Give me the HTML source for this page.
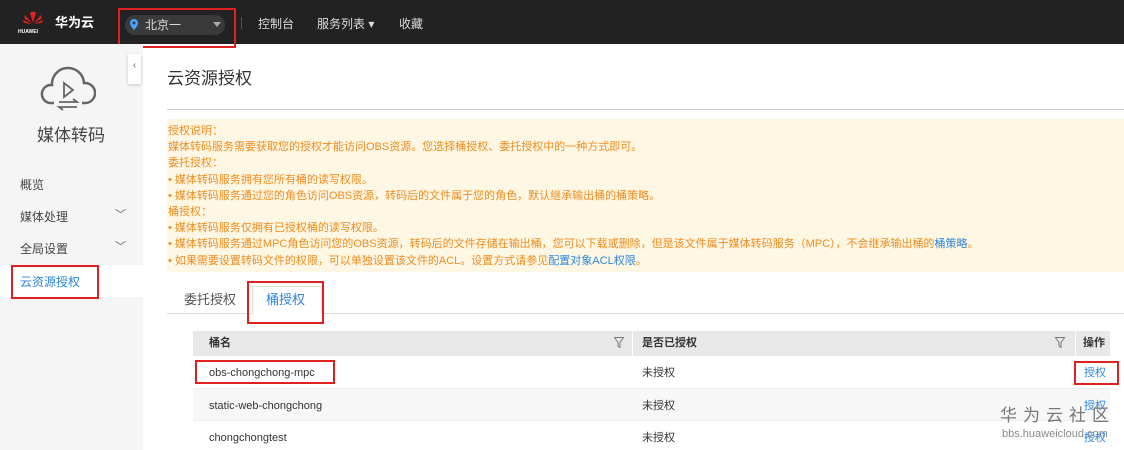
<!DOCTYPE html><html><head><meta charset="utf-8"><style>
*{margin:0;padding:0;box-sizing:border-box}
body{width:1124px;height:450px;overflow:hidden;background:#fff;font-family:"Liberation Sans","Noto Sans CJK SC",sans-serif;position:relative;color:#333}
.a{position:absolute;line-height:1.2}
.top{left:0;top:0;width:1124px;height:44px;background:#222}
.red{border:2px solid #e0211f}
.side{left:0;top:44px;width:143px;height:406px;background:#f5f5f5}
.nt{font-size:11px;line-height:16.2px!important;color:#f08c1e}
.nt a{color:#2e86de}
.fi{width:10px;height:11px}
</style></head><body>
<div class="a top"></div>
<svg class="a" style="left:21px;top:11px" width="24" height="18" viewBox="0 0 24 18"><g fill="#e0211f"><path d="M12 12 L9 2 Q11 0 12 1Z"/><path d="M12 12 L15 2 Q13 0 12 1Z"/><path d="M11 12 L4 4 Q3 6 4 8Z"/><path d="M13 12 L20 4 Q21 6 20 8Z"/><path d="M11 13 L2 9 Q2 11 4 12Z"/><path d="M13 13 L22 9 Q22 11 20 12Z"/></g></svg>
<div class="a" style="left:18px;top:29px;font-size:5px;color:#fff;font-weight:bold">HUAWEI</div>
<div class="a" style="left:55px;top:15px;font-size:13px;color:#fff;font-weight:bold">华为云</div>
<div class="a red" style="left:118px;top:8px;width:118px;height:40px"></div>
<div class="a" style="left:125px;top:15px;width:100px;height:20px;border-radius:10px;background:#3a3a3a"></div>
<svg class="a" style="left:130px;top:19px" width="8" height="11"><path d="M4 0a4 4 0 0 1 4 4c0 3-4 7-4 7S0 7 0 4a4 4 0 0 1 4-4z" fill="#4aa3ff"/><circle cx="4" cy="4" r="1.5" fill="#3a3a3a"/></svg>
<div class="a" style="left:145px;top:18px;font-size:12px;color:#ddd">北京一</div>
<div class="a" style="left:213px;top:22px;border:4px solid transparent;border-top:5px solid #aaa"></div>
<div class="a" style="left:241px;top:17px;width:1px;height:12px;background:#555"></div>
<div class="a" style="left:258px;top:17px;font-size:12px;color:#ddd">控制台</div>
<div class="a" style="left:317px;top:17px;font-size:12px;color:#ddd">服务列表 ▾</div>
<div class="a" style="left:399px;top:17px;font-size:12px;color:#ddd">收藏</div>
<div class="a side"></div>
<svg class="a" style="left:40px;top:63px" width="56" height="50" viewBox="0 0 56 50"><path d="M14 40 H10 A9 9 0 0 1 12 22 A16 16 0 0 1 44 20 A10 10 0 0 1 46 40 H42" fill="none" stroke="#666" stroke-width="2.5"/><path d="M24 20 L33 27 L24 34Z" fill="none" stroke="#666" stroke-width="1.8"/><path d="M19 39 H37 L33 36 M37 44 H19 L23 47" fill="none" stroke="#666" stroke-width="1.8"/></svg>
<div class="a" style="left:37px;top:126px;font-size:17px;color:#444">媒体转码</div>
<div class="a" style="left:20px;top:178px;font-size:12px;color:#444">概览</div>
<div class="a" style="left:20px;top:210px;font-size:12px;color:#444">媒体处理</div>
<div class="a" style="left:115px;top:209px;font-size:11px;color:#666">﹀</div>
<div class="a" style="left:20px;top:242px;font-size:12px;color:#444">全局设置</div>
<div class="a" style="left:115px;top:241px;font-size:11px;color:#666">﹀</div>
<div class="a" style="left:0;top:265px;width:143px;height:32px;background:#fff"></div>
<div class="a red" style="left:11px;top:265px;width:88px;height:34px"></div>
<div class="a" style="left:20px;top:275px;font-size:12px;color:#2e86de">云资源授权</div>
<div class="a" style="left:128px;top:54px;width:13px;height:30px;background:#fff;box-shadow:0 1px 3px rgba(0,0,0,.2);font-size:10px;color:#666;text-align:center;line-height:24px">‹</div>
<div class="a" style="left:167px;top:69px;font-size:17px;color:#333">云资源授权</div>
<div class="a" style="left:167px;top:109px;width:957px;height:1px;background:#ccc"></div>
<div class="a nt" style="left:167px;top:119px;width:957px;height:153px;background:#fef7e4;padding:4px 0 0 1px">授权说明：<br>媒体转码服务需要获取您的授权才能访问OBS资源。您选择桶授权、委托授权中的一种方式即可。<br>委托授权：<br>• 媒体转码服务拥有您所有桶的读写权限。<br>• 媒体转码服务通过您的角色访问OBS资源，转码后的文件属于您的角色，默认继承输出桶的桶策略。<br>桶授权：<br>• 媒体转码服务仅拥有已授权桶的读写权限。<br>• 媒体转码服务通过MPC角色访问您的OBS资源，转码后的文件存储在输出桶，您可以下载或删除，但是该文件属于媒体转码服务（MPC），不会继承输出桶的<a>桶策略</a>。<br>• 如果需要设置转码文件的权限，可以单独设置该文件的ACL。设置方式请参见<a>配置对象ACL权限</a>。</div>
<div class="a" style="left:167px;top:313px;width:957px;height:1px;background:#ddd"></div>
<div class="a" style="left:184px;top:292px;font-size:13px;color:#555">委托授权</div>
<div class="a" style="left:252px;top:286px;width:70px;height:28px;background:#fff;border:1px solid #ddd;border-bottom:none"></div>
<div class="a red" style="left:247px;top:281px;width:77px;height:43px"></div>
<div class="a" style="left:266px;top:292px;font-size:13px;color:#2e86de">桶授权</div>
<div class="a" style="left:193px;top:331px;width:917px;height:25px;background:#e8e8e8"></div>
<div class="a" style="left:632px;top:331px;width:1px;height:25px;background:#fff"></div>
<div class="a" style="left:1075px;top:331px;width:1px;height:25px;background:#fff"></div>
<div class="a" style="left:209px;top:337px;font-size:11px;font-weight:bold;color:#333">桶名</div>
<div class="a" style="left:642px;top:337px;font-size:11px;font-weight:bold;color:#333">是否已授权</div>
<div class="a" style="left:1083px;top:337px;font-size:11px;font-weight:bold;color:#333">操作</div>
<svg class="a fi" style="left:614px;top:337px"><path d="M.5 .5H9.5L6 5.5V10.5L4 9V5.5Z" fill="none" stroke="#777"/></svg>
<svg class="a fi" style="left:1055px;top:337px"><path d="M.5 .5H9.5L6 5.5V10.5L4 9V5.5Z" fill="none" stroke="#777"/></svg>
<div class="a" style="left:193px;top:388px;width:917px;height:32px;background:#f7f7f7"></div>
<div class="a" style="left:193px;top:388px;width:917px;height:1px;background:#eee"></div>
<div class="a" style="left:193px;top:420px;width:917px;height:1px;background:#eee"></div>
<div class="a red" style="left:195px;top:360px;width:140px;height:24px"></div>
<div class="a" style="left:209px;top:366px;font-size:11px;color:#333;line-height:14px">obs-chongchong-mpc</div>
<div class="a" style="left:209px;top:399px;font-size:11px;color:#333;line-height:14px">static-web-chongchong</div>
<div class="a" style="left:209px;top:431px;font-size:11px;color:#333;line-height:14px">chongchongtest</div>
<div class="a" style="left:642px;top:366px;font-size:11px;color:#333;line-height:14px">未授权</div>
<div class="a" style="left:642px;top:399px;font-size:11px;color:#333;line-height:14px">未授权</div>
<div class="a" style="left:642px;top:431px;font-size:11px;color:#333;line-height:14px">未授权</div>
<div class="a red" style="left:1074px;top:361px;width:45px;height:24px"></div>
<div class="a" style="left:1084px;top:366px;font-size:11px;color:#2e86de;line-height:14px">授权</div>
<div class="a" style="left:1084px;top:399px;font-size:11px;color:#2e86de;line-height:14px">授权</div>
<div class="a" style="left:1084px;top:431px;font-size:11px;color:#2e86de;line-height:14px">授权</div>
<div class="a" style="left:1000px;top:406px;font-size:17px;color:#777;letter-spacing:6px">华为云社区</div>
<div class="a" style="left:1002px;top:428px;font-size:11px;color:#888">bbs.huaweicloud.com</div>
</body></html>
